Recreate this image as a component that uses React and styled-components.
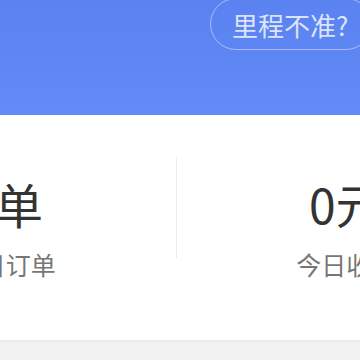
import React from 'react';
import styled, { createGlobalStyle } from 'styled-components';

const GlobalStyle = createGlobalStyle`
  html, body {
    margin: 0;
    padding: 0;
    background: #f2f2f2;
  }
  body {
    font-family: "Noto Sans CJK SC", "Noto Sans", sans-serif;
  }
`;

const Page = styled.div`
  width: 360px;
  height: 360px;
  overflow: hidden;
  background: #f2f2f2;
`;

const Header = styled.div`
  height: 115px;
  display: flex;
  align-items: flex-start;
  padding-left: 210px;
  background: linear-gradient(180deg, #5a82f0 0%, #638bf7 100%);
  overflow: hidden;
  box-sizing: border-box;
`;

const Pill = styled.div`
  flex-shrink: 0;
  margin-top: -2px;
  height: 52px;
  padding: 0 23px 0 21px;
  display: flex;
  align-items: center;
  border: 1px solid rgba(255, 255, 255, 0.45);
  border-radius: 26px;
  box-sizing: border-box;
  color: rgba(255, 255, 255, 0.8);
  font-size: 26px;
  white-space: nowrap;
`;

const StatsCard = styled.div`
  width: 680px;
  height: 225px;
  margin-left: -164px;
  display: flex;
  align-items: center;
  background: #fff;
  box-shadow: 0 2px 3px rgba(0, 0, 0, 0.03);
`;

const Stat = styled.div`
  flex: 1;
  display: flex;
  flex-direction: column;
  align-items: center;
  gap: 17px;
`;

const Value = styled.div`
  font-size: 48px;
  line-height: 56px;
  color: #333;
  white-space: nowrap;
`;

const Label = styled.div`
  font-size: 25px;
  line-height: 32px;
  color: #777;
  white-space: nowrap;
`;

const Divider = styled.div`
  align-self: flex-start;
  margin-top: 42px;
  width: 1px;
  height: 101px;
  background: #ececec;
`;

const stats = [
  { value: '0单', label: '今日订单' },
  { value: '0元', label: '今日收入' },
];

export default function App() {
  return (
    <Page>
      <GlobalStyle />
      <Header>
        <Pill>里程不准?</Pill>
      </Header>
      <StatsCard>
        <Stat>
          <Value>{stats[0].value}</Value>
          <Label>{stats[0].label}</Label>
        </Stat>
        <Divider />
        <Stat>
          <Value>{stats[1].value}</Value>
          <Label>{stats[1].label}</Label>
        </Stat>
      </StatsCard>
    </Page>
  );
}
